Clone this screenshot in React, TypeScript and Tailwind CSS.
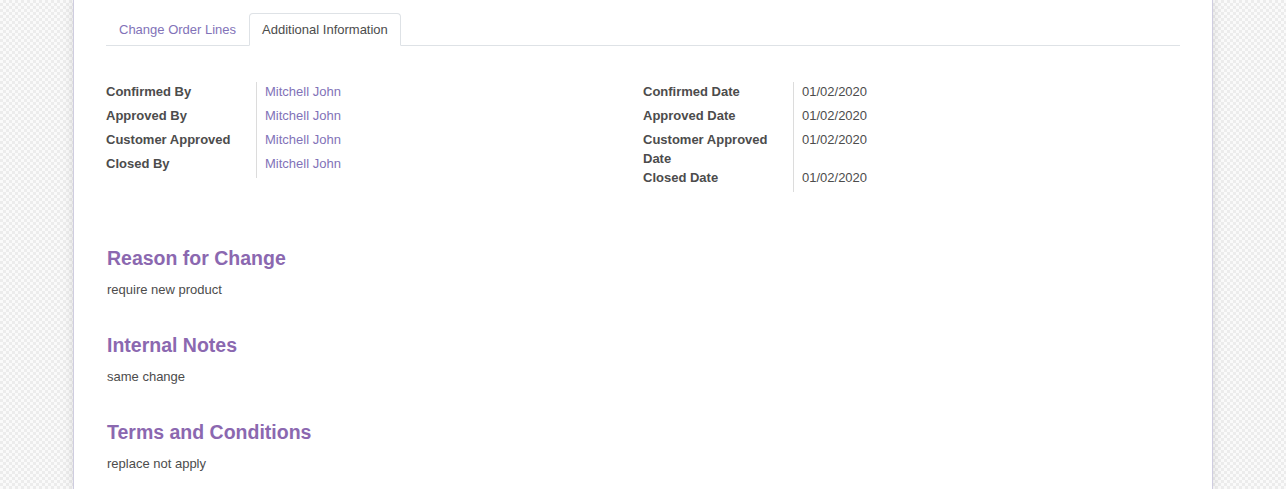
const leftFields = [
  { label: 'Confirmed By', value: 'Mitchell John' },
  { label: 'Approved By', value: 'Mitchell John' },
  { label: 'Customer Approved', value: 'Mitchell John' },
  { label: 'Closed By', value: 'Mitchell John' },
];

const rightFields = [
  { label: 'Confirmed Date', value: '01/02/2020' },
  { label: 'Approved Date', value: '01/02/2020' },
  { label: 'Customer Approved Date', value: '01/02/2020' },
  { label: 'Closed Date', value: '01/02/2020' },
];

const notes = [
  { title: 'Reason for Change', text: 'require new product' },
  { title: 'Internal Notes', text: 'same change' },
  { title: 'Terms and Conditions', text: 'replace not apply' },
];

type Field = { label: string; value: string };

const FieldGroup = ({ fields, link }: { fields: Field[]; link?: boolean }) => (
  <div className="grid grid-cols-[150px_1fr] content-start">
    {fields.map((field) => (
      <div key={field.label} className="contents">
        <div className="pr-4 font-bold leading-[19px] text-[#4c4c4c]">{field.label}</div>
        <div
          className={`border-l border-[#dcdcdc] pb-[5px] pl-2 leading-[19px] ${
            link ? 'text-[#8272b8]' : 'text-[#4c4c4c]'
          }`}
        >
          {field.value}
        </div>
      </div>
    ))}
  </div>
);

export default function App() {
  return (
    <div className="min-h-[489px] bg-[#f7f7f7] bg-[repeating-conic-gradient(#ececec_0%_25%,#fafafa_0%_50%)] bg-[length:6px_6px] font-['Liberation_Sans',Arial,sans-serif] text-[13px]">
      <div className="mx-auto min-h-[489px] w-[1140px] border-x border-[#cfcde0] bg-white px-8 pt-[13px] shadow-[0_0_10px_rgba(0,0,0,0.12)]">
        {/* tabs */}
        <div className="flex border-b border-[#dee2e6]">
          <div className="-mb-px flex h-[33px] items-center border border-transparent px-3 text-[#8272b8]">
            Change Order Lines
          </div>
          <div className="-mb-px flex h-[33px] items-center rounded-t border border-[#dee2e6] border-b-white bg-white px-3 text-[#4c4c4c]">
            Additional Information
          </div>
        </div>

        <div className="mt-[36px] grid grid-cols-2 items-start">
          <FieldGroup fields={leftFields} link />
          <FieldGroup fields={rightFields} />
        </div>

        <div className="mt-[55px]">
          {notes.map((note) => (
            <div key={note.title} className="mb-[34.5px]">
              <h2 className="pl-px text-[19.5px] font-bold leading-[23.4px] text-[#8b68b0]">{note.title}</h2>
              <p className="mt-[9.5px] pl-px leading-[19.5px] text-[#4c4c4c]">{note.text}</p>
            </div>
          ))}
        </div>
      </div>
    </div>
  );
}
